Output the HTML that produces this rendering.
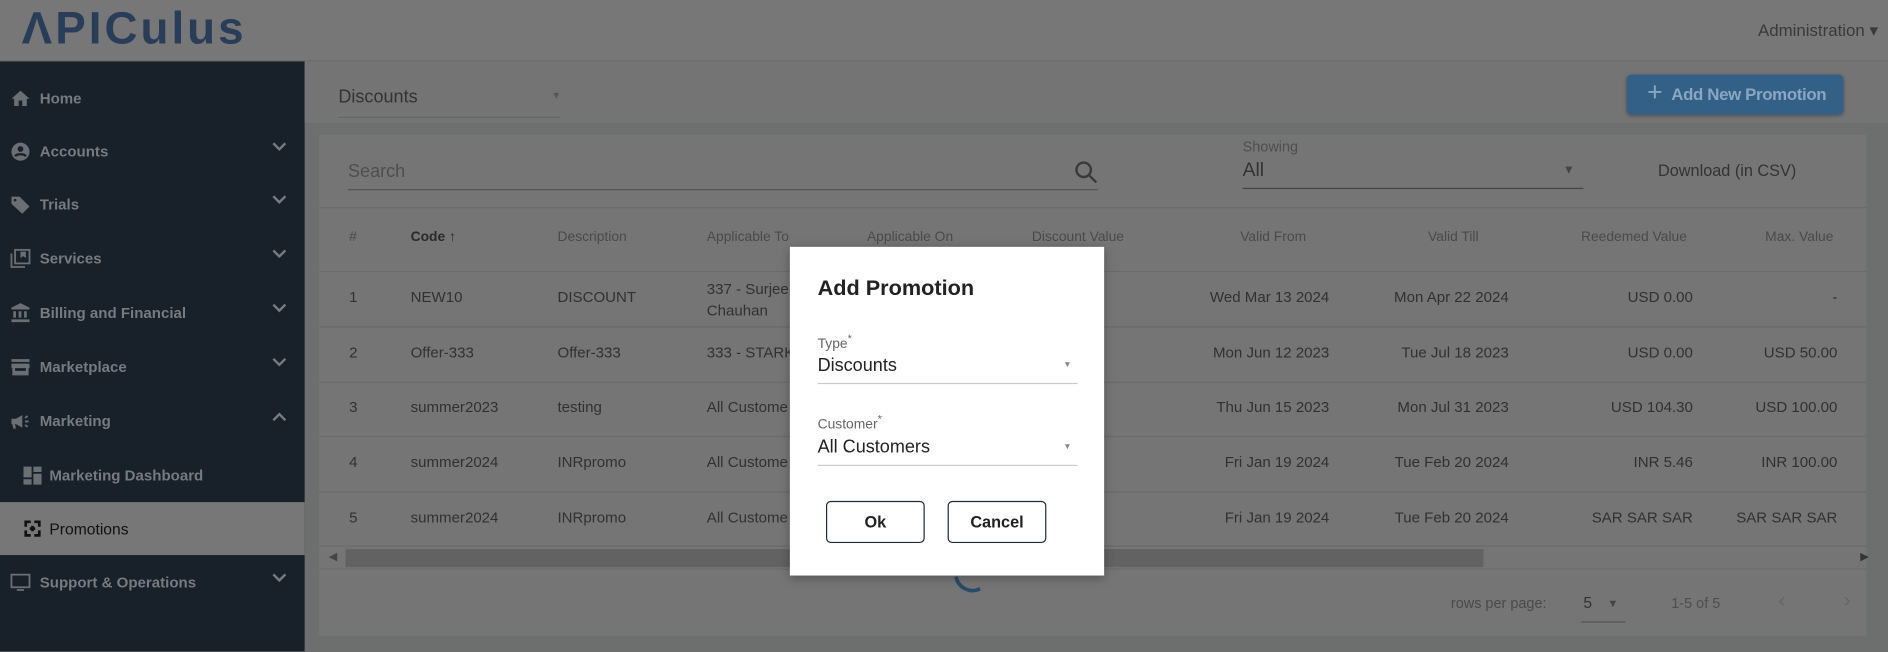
<!DOCTYPE html>
<html><head><meta charset="utf-8"><style>
*{margin:0;padding:0;box-sizing:border-box}
html,body{width:1888px;height:652px;overflow:hidden;background:#6d6f6e}
#w{position:absolute;left:0;top:0;width:1568px;height:541px;transform:scale(1.20408);transform-origin:0 0;font-family:"Liberation Sans",sans-serif;background:#6d6f6e}
.a{position:absolute;white-space:nowrap}
.sb{position:absolute;left:0;top:51px;width:253px;height:490px;background:#18202a}
.si{position:absolute;left:0;width:253px;height:45px;color:#767b82;font-weight:bold;font-size:12.5px}
.si span{position:absolute;left:33px;top:15px}
.si .ic{position:absolute;left:7px;top:13px;width:20px;height:18px}
.si .ch{position:absolute;left:226px;top:12px;width:12px;height:12px}
.t{font-size:12.5px;color:#313131}
.h{font-size:11.5px;color:#4a4a4a}
.ln{position:absolute;left:265px;width:1285px;height:1px;background:#6a6a6a}
</style></head><body><div id="w">
<div class="a" style="left:0;top:0;width:1568px;height:51px;background:#777"></div>
<div class="a" style="left:0;top:50px;width:1568px;height:1px;background:#6c6c6c"></div>
<div class="a" style="left:18px;top:3px;font-size:38px;font-weight:bold;color:#283d58;letter-spacing:2.5px">&#923;PICulus</div>
<div class="a" style="left:1460px;top:17px;font-size:14px;color:#3a3a3a">Administration &#9662;</div>

<div class="sb"></div>
<div class="si" style="top:60px"><svg class="ic" viewBox="0 0 24 24"><path fill="#6a6f76" d="M10 20v-6h4v6h5v-8h3L12 3 2 12h3v8z"/></svg><span>Home</span></div>
<div class="si" style="top:104px"><svg class="ic" viewBox="0 0 24 24"><circle cx="12" cy="12" r="10" fill="#6a6f76"/><circle cx="12" cy="9" r="3.2" fill="#18202a"/><path d="M6 17c2-3 10-3 12 0" stroke="#18202a" stroke-width="2.5" fill="none"/></svg><span>Accounts</span><svg class="ch" viewBox="0 0 12 12"><path d="M1 3l5 5 5-5" stroke="#767b82" stroke-width="2" fill="none"/></svg></div>
<div class="si" style="top:148px"><svg class="ic" viewBox="0 0 24 24"><path fill="#6a6f76" d="M2 3h9l11 11-8 8L2 11z"/><circle cx="6" cy="7" r="1.5" fill="#18202a"/></svg><span>Trials</span><svg class="ch" viewBox="0 0 12 12"><path d="M1 3l5 5 5-5" stroke="#767b82" stroke-width="2" fill="none"/></svg></div>
<div class="si" style="top:193px"><svg class="ic" viewBox="0 0 24 24"><path d="M2 6v15h15" stroke="#6a6f76" stroke-width="2" fill="none"/><rect x="6" y="2" width="16" height="15" stroke="#6a6f76" stroke-width="2" fill="none"/><path fill="#6a6f76" d="M12 4h6v7l-3-2-3 2z"/></svg><span>Services</span><svg class="ch" viewBox="0 0 12 12"><path d="M1 3l5 5 5-5" stroke="#767b82" stroke-width="2" fill="none"/></svg></div>
<div class="si" style="top:238px"><svg class="ic" viewBox="0 0 24 24"><path fill="#6a6f76" d="M12 1l10 5v2H2V6zM4 10h3v7H4zm6 0h3v7h-3zm6 0h3v7h-3zM2 19h20v3H2z"/></svg><span>Billing and Financial</span><svg class="ch" viewBox="0 0 12 12"><path d="M1 3l5 5 5-5" stroke="#767b82" stroke-width="2" fill="none"/></svg></div>
<div class="si" style="top:283px"><svg class="ic" viewBox="0 0 24 24"><path fill="#6a6f76" d="M2 3h20v3H2zM2 8h20v5H2zM3 13h3v8H3zM18 13h3v8h-3zM6 16h12v5H6z"/></svg><span>Marketplace</span><svg class="ch" viewBox="0 0 12 12"><path d="M1 3l5 5 5-5" stroke="#767b82" stroke-width="2" fill="none"/></svg></div>
<div class="si" style="top:328px"><svg class="ic" viewBox="0 0 24 24"><path fill="#6a6f76" d="M2 9h5l7-4v14l-7-4H6l1 5H4l-1-5H2z"/><path d="M17 8l3-2M17 12h4M17 16l3 2" stroke="#6a6f76" stroke-width="2"/></svg><span>Marketing</span><svg class="ch" viewBox="0 0 12 12"><path d="M1 9l5-5 5 5" stroke="#767b82" stroke-width="2" fill="none"/></svg></div>
<div class="si" style="top:373px"><svg class="ic" style="left:17px" viewBox="0 0 24 24"><path fill="#6a6f76" d="M2 2h9v12H2zM13 2h9v6h-9zM13 10h9v12h-9zM2 16h9v6H2z"/></svg><span style="left:41px">Marketing Dashboard</span></div>
<div class="si" style="top:417px;height:44px;background:#777;color:#111;font-weight:normal"><svg class="ic" style="left:17px" viewBox="0 0 24 24"><path d="M3 3h7v3H6v4H3zM14 3h7v7h-3V6h-4zM3 14h3v4h4v3H3zM18 14h3v7h-7v-3h4z" fill="#111"/><path d="M9 12h6M12 9v6" stroke="#111" stroke-width="3"/></svg><span style="left:41px;font-size:13px">Promotions</span></div>
<div class="si" style="top:462px"><svg class="ic" viewBox="0 0 24 24"><rect x="2" y="3" width="20" height="14" stroke="#6a6f76" stroke-width="2" fill="none"/><path fill="#6a6f76" d="M8 19h8v2H8z"/></svg><span>Support &amp; Operations</span><svg class="ch" viewBox="0 0 12 12"><path d="M1 3l5 5 5-5" stroke="#767b82" stroke-width="2" fill="none"/></svg></div>

<div class="a" style="left:253px;top:51px;width:1315px;height:51px;background:#747474"></div>
<div class="a" style="left:281px;top:72px;font-size:15px;color:#333">Discounts</div>
<div class="a" style="left:458px;top:75px;font-size:8px;color:#555">&#9660;</div>
<div class="a" style="left:281px;top:97px;width:184px;height:1px;background:#666"></div>
<div class="a" style="left:1351px;top:62px;width:180px;height:33px;background:#336086;border-radius:4px;box-shadow:0 1px 3px rgba(0,0,0,.3)"></div>
<div class="a" style="left:1368px;top:64px;font-size:22px;color:#8aa6c2">+</div>
<div class="a" style="left:1388px;top:70px;font-size:14px;font-weight:bold;color:#8aa6c2;letter-spacing:-0.3px">Add New Promotion</div>

<div class="a" style="left:265px;top:112px;width:1285px;height:416px;background:#757575"></div>
<div class="a" style="left:289px;top:134px;font-size:15px;color:#4e4e4e">Search</div>
<svg class="a" style="left:892px;top:133px" width="20" height="20" viewBox="0 0 20 20"><circle cx="8" cy="8" r="6" stroke="#3a3a3a" stroke-width="2" fill="none"/><path d="M12.5 12.5l6 6" stroke="#3a3a3a" stroke-width="2"/></svg>
<div class="a" style="left:289px;top:157px;width:623px;height:1px;background:#555"></div>
<div class="a" style="left:1032px;top:115px;font-size:12px;color:#4e4e4e">Showing</div>
<div class="a" style="left:1032px;top:133px;font-size:16px;color:#333">All</div>
<div class="a" style="left:1298px;top:136px;font-size:10px;color:#444">&#9660;</div>
<div class="a" style="left:1032px;top:156px;width:283px;height:1px;background:#444"></div>
<div class="a" style="left:1377px;top:134px;font-size:13.5px;color:#333">Download (in CSV)</div>
<div class="ln" style="top:172px"></div>

<div class="a h" style="left:290px;top:191px">#</div>
<div class="a h" style="left:341px;top:191px;color:#2a2a2a;font-weight:bold">Code &#8593;</div>
<div class="a h" style="left:463px;top:191px">Description</div>
<div class="a h" style="left:587px;top:191px">Applicable To</div>
<div class="a h" style="left:720px;top:191px">Applicable On</div>
<div class="a h" style="left:857px;top:191px">Discount Value</div>
<div class="a h" style="left:1030px;top:191px">Valid From</div>
<div class="a h" style="left:1186px;top:191px">Valid Till</div>
<div class="a h" style="left:1313px;top:191px">Reedemed Value</div>
<div class="a h" style="left:1466px;top:191px">Max. Value</div>
<div class="ln" style="top:225px"></div><div class="ln" style="top:271px"></div><div class="ln" style="top:317px"></div><div class="ln" style="top:362px"></div><div class="ln" style="top:408px"></div><div class="ln" style="top:453px"></div>

<div class="a t" style="left:290px;top:240px">1</div><div class="a t" style="left:341px;top:240px">NEW10</div><div class="a t" style="left:463px;top:240px">DISCOUNT</div><div class="a t" style="left:587px;top:231px;line-height:18px">337 - Surjee<br>Chauhan</div>
<div class="a t" style="left:290px;top:286px">2</div><div class="a t" style="left:341px;top:286px">Offer-333</div><div class="a t" style="left:463px;top:286px">Offer-333</div><div class="a t" style="left:587px;top:286px">333 - STARK</div>
<div class="a t" style="left:290px;top:331px">3</div><div class="a t" style="left:341px;top:331px">summer2023</div><div class="a t" style="left:463px;top:331px">testing</div><div class="a t" style="left:587px;top:331px">All Custome</div>
<div class="a t" style="left:290px;top:377px">4</div><div class="a t" style="left:341px;top:377px">summer2024</div><div class="a t" style="left:463px;top:377px">INRpromo</div><div class="a t" style="left:587px;top:377px">All Custome</div>
<div class="a t" style="left:290px;top:423px">5</div><div class="a t" style="left:341px;top:423px">summer2024</div><div class="a t" style="left:463px;top:423px">INRpromo</div><div class="a t" style="left:587px;top:423px">All Custome</div>

<div class="a t" style="right:464px;top:240px">Wed Mar 13 2024</div><div class="a t" style="right:315px;top:240px">Mon Apr 22 2024</div><div class="a t" style="right:162px;top:240px">USD 0.00</div><div class="a t" style="right:42px;top:240px">-</div>
<div class="a t" style="right:464px;top:286px">Mon Jun 12 2023</div><div class="a t" style="right:315px;top:286px">Tue Jul 18 2023</div><div class="a t" style="right:162px;top:286px">USD 0.00</div><div class="a t" style="right:42px;top:286px">USD 50.00</div>
<div class="a t" style="right:464px;top:331px">Thu Jun 15 2023</div><div class="a t" style="right:315px;top:331px">Mon Jul 31 2023</div><div class="a t" style="right:162px;top:331px">USD 104.30</div><div class="a t" style="right:42px;top:331px">USD 100.00</div>
<div class="a t" style="right:464px;top:377px">Fri Jan 19 2024</div><div class="a t" style="right:315px;top:377px">Tue Feb 20 2024</div><div class="a t" style="right:162px;top:377px">INR 5.46</div><div class="a t" style="right:42px;top:377px">INR 100.00</div>
<div class="a t" style="right:464px;top:423px">Fri Jan 19 2024</div><div class="a t" style="right:315px;top:423px">Tue Feb 20 2024</div><div class="a t" style="right:162px;top:423px">SAR SAR SAR</div><div class="a t" style="right:42px;top:423px">SAR SAR SAR</div>

<div class="a" style="left:287px;top:456px;width:945px;height:15px;background:#626262"></div>
<div class="a" style="left:273px;top:457px;font-size:9px;color:#444">&#9664;</div>
<div class="a" style="left:1545px;top:457px;font-size:9px;color:#333">&#9654;</div>
<div class="ln" style="top:472px"></div>
<div class="a" style="left:1205px;top:494px;font-size:12px;color:#4a4a4a">rows per page:</div>
<div class="a" style="left:1315px;top:493px;font-size:13px;color:#333">5</div>
<div class="a" style="left:1335px;top:496px;font-size:9px;color:#444">&#9660;</div>
<div class="a" style="left:1313px;top:516px;width:37px;height:1px;background:#555"></div>
<div class="a" style="left:1388px;top:494px;font-size:12px;color:#4e4e4e">1-5 of 5</div>
<div class="a" style="left:1477px;top:488px;font-size:18px;color:#666">&#8249;</div>
<div class="a" style="left:1531px;top:488px;font-size:18px;color:#666">&#8250;</div>
<svg class="a" style="left:790px;top:465px" width="32" height="30" viewBox="0 0 32 30"><path d="M4 14 A14 14 0 0 0 24 24" stroke="#2b4a6a" stroke-width="3" fill="none"/></svg>

<div class="a" style="left:656px;top:205px;width:261px;height:273px;background:#fff;box-shadow:0 2px 8px rgba(0,0,0,.3)"></div>
<div class="a" style="left:679px;top:229px;font-size:18px;font-weight:bold;color:#222">Add Promotion</div>
<div class="a" style="left:679px;top:276px;font-size:11.5px;color:#666">Type<sup style="font-size:9px">*</sup></div>
<div class="a" style="left:679px;top:295px;font-size:15px;color:#222">Discounts</div>
<div class="a" style="left:883px;top:300px;font-size:7px;color:#888">&#9660;</div>
<div class="a" style="left:679px;top:318px;width:216px;height:1px;background:#ccc"></div>
<div class="a" style="left:679px;top:343px;font-size:11.5px;color:#666">Customer<sup style="font-size:9px">*</sup></div>
<div class="a" style="left:679px;top:363px;font-size:15px;color:#222">All Customers</div>
<div class="a" style="left:883px;top:368px;font-size:7px;color:#888">&#9660;</div>
<div class="a" style="left:679px;top:386px;width:216px;height:1px;background:#ccc"></div>
<div class="a" style="left:686px;top:416px;width:82px;height:35px;border:1px solid #1d2a3a;border-radius:4px;font-size:13.5px;font-weight:bold;color:#222;text-align:center;line-height:33px">Ok</div>
<div class="a" style="left:787px;top:416px;width:82px;height:35px;border:1px solid #1d2a3a;border-radius:4px;font-size:13.5px;font-weight:bold;color:#222;text-align:center;line-height:33px">Cancel</div>
</div></body></html>
